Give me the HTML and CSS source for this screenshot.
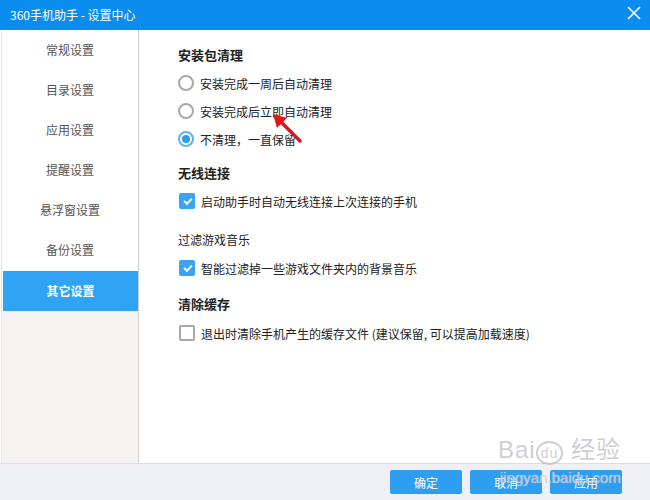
FILE: index.html
```html
<!DOCTYPE html>
<html lang="zh-CN">
<head>
    <meta charset="UTF-8">
    <title>360手机助手 - 设置中心</title>
    <link rel="stylesheet" href="styles.css">
</head>
<body>
<div class="window">

    <!-- Title bar -->
    <div class="titlebar">
        <span class="title">360手机助手 - 设置中心</span>
        <svg class="close" width="14" height="14" viewBox="0 0 14 14">
            <path d="M1 1 L13 13 M13 1 L1 13" stroke="#fff" stroke-width="1.6" fill="none"/>
        </svg>
    </div>

    <div class="main">
        <!-- Left menu -->
        <div class="sidebar">
            <ul class="menu">
                <li>常规设置</li>
                <li>目录设置</li>
                <li>应用设置</li>
                <li>提醒设置</li>
                <li>悬浮窗设置</li>
                <li>备份设置</li>
                <li class="active">其它设置</li>
            </ul>
        </div>

        <!-- Settings -->
        <div class="content">
            <div class="heading">安装包清理</div>
            <label class="row"><span class="radio"></span>安装完成一周后自动清理</label>
            <label class="row"><span class="radio"></span>安装完成后立即自动清理</label>
            <label class="row"><span class="radio checked"></span>不清理，一直保留</label>

            <div class="heading sec2">无线连接</div>
            <label class="row"><span class="check checked"></span>启动助手时自动无线连接上次连接的手机</label>

            <div class="subheading">过滤游戏音乐</div>
            <label class="row"><span class="check checked"></span>智能过滤掉一些游戏文件夹内的背景音乐</label>

            <div class="heading sec4">清除缓存</div>
            <label class="row"><span class="check"></span>退出时清除手机产生的缓存文件 (建议保留, 可以提高加载速度)</label>

            <!-- red arrow annotation -->
            <svg class="arrow" width="40" height="40" viewBox="0 0 40 40">
                <path d="M33 32 L14 13" stroke="#e0161b" stroke-width="3.5" stroke-linecap="round"/>
                <path d="M6 5 L20 9 L10 19 Z" fill="#e0161b"/>
            </svg>
        </div>
    </div>

    <!-- Bottom buttons -->
    <div class="footer">
        <button class="btn">确定</button>
        <button class="btn">取消</button>
        <button class="btn">应用</button>
    </div>

    <!-- watermark -->
    <div class="watermark">
        <div class="wm-logo">Bai<span class="paw">du</span> 经验</div>
        <div class="wm-url">jingyan.baidu.com</div>
    </div>
</div>
</body>
</html>
```

FILE: styles.css
```css
/* Page */
body {
    margin: 0;
    font-family: "Noto Sans CJK SC", "Liberation Sans", sans-serif;
    font-size: 12px;
    color: #222;
    background: #fff;
}

.window {
    position: relative;
    width: 650px;
    height: 500px;
    display: flex;
    flex-direction: column;
    overflow: hidden;
}

/* Title bar */
.titlebar {
    height: 30px;
    background-color: #0b8df0;
    display: flex;
    align-items: center;
    justify-content: space-between;
    padding: 0 9px 0 10px;
    color: #fff;
    flex-shrink: 0;
}

.title {
    font-size: 12px;
    line-height: 30px;
}

.close {
    margin-top: -4px;
}

/* Main area */
.main {
    flex: 1;
    display: flex;
}

.sidebar {
    width: 136px;
    margin-left: 1px;
    border-left: 1px solid #e6e6e6;
    border-right: 1px solid #cfcfcf;
    background-color: #f5f3f2;
}

.menu {
    list-style: none;
    margin: 0;
    padding: 0;
    background: #fff;
}

.menu li {
    height: 40px;
    line-height: 40px;
    text-align: center;
    color: #555;
}

.menu li.active {
    background-color: #31a3f4;
    color: #fff;
    font-weight: bold;
    margin-left: 1px;
    position: relative;
    top: 1px;
}

/* Content */
.content {
    position: relative;
    flex: 1;
    padding: 15px 0 0 39px;
}

.heading {
    font-size: 13px;
    font-weight: bold;
    line-height: 20px;
    height: 20px;
    margin-bottom: 4px;
}

.heading.sec2 {
    margin-top: 10px;
}

.heading.sec4 {
    margin-top: 12px;
    margin-bottom: 5px;
}

.subheading {
    line-height: 20px;
    height: 20px;
    margin-top: 15px;
    margin-bottom: 4px;
}

.row {
    display: flex;
    align-items: center;
    height: 28px;
    gap: 6px;
}

/* Radio buttons */
.radio {
    width: 12px;
    height: 12px;
    border: 2px solid #a9a9a9;
    border-radius: 50%;
    box-sizing: content-box;
    flex-shrink: 0;
    position: relative;
}

.radio.checked {
    border-color: #5fb3ee;
}

.radio.checked::after {
    content: "";
    position: absolute;
    left: 2px;
    top: 2px;
    width: 8px;
    height: 8px;
    border-radius: 50%;
    background: #2f9cf0;
}

/* Checkboxes */
.check {
    width: 12px;
    height: 12px;
    border: 2px solid #a8a8a8;
    border-radius: 2px;
    flex-shrink: 0;
    position: relative;
    margin-left: 1px;
}

.check.checked {
    background: #3ba3f1;
    border-color: #3ba3f1;
}

.check.checked::after {
    content: "";
    position: absolute;
    left: 3px;
    top: 1px;
    width: 6px;
    height: 3px;
    border-left: 2px solid #fff;
    border-bottom: 2px solid #fff;
    transform: rotate(-45deg);
    top: 3px;
}

/* Annotation arrow */
.arrow {
    position: absolute;
    left: 128px;
    top: 79px;
}

/* Footer */
.footer {
    height: 36px;
    flex-shrink: 0;
    border-top: 1px solid #dcdde2;
    background-color: #eff0f4;
    display: flex;
    justify-content: flex-end;
    align-items: center;
    gap: 8px;
    padding-right: 28px;
}

.btn {
    width: 72px;
    height: 24px;
    border: none;
    border-radius: 2px;
    background-color: #2d9ef2;
    color: #fff;
    font-family: inherit;
    font-size: 12px;
    padding: 0;
}

/* Watermark */
.watermark {
    position: absolute;
    left: 498px;
    top: 436px;
    color: rgba(190, 190, 195, 0.75);
    pointer-events: none;
    text-shadow: 0 0 1px rgba(255, 255, 255, 0.8);
}

.wm-logo {
    font-family: "Liberation Sans", "Noto Sans CJK SC", sans-serif;
    font-size: 24px;
    line-height: 28px;
    letter-spacing: 1px;
}

.paw {
    display: inline-block;
    font-size: 14px;
    line-height: 20px;
    padding: 0 3px;
    border: 2px solid rgba(190, 190, 195, 0.75);
    border-radius: 50%;
}

.wm-url {
    font-family: "Liberation Sans", sans-serif;
    font-size: 15px;
    line-height: 18px;
    margin-top: 4px;
    margin-left: 2px;
}
```
